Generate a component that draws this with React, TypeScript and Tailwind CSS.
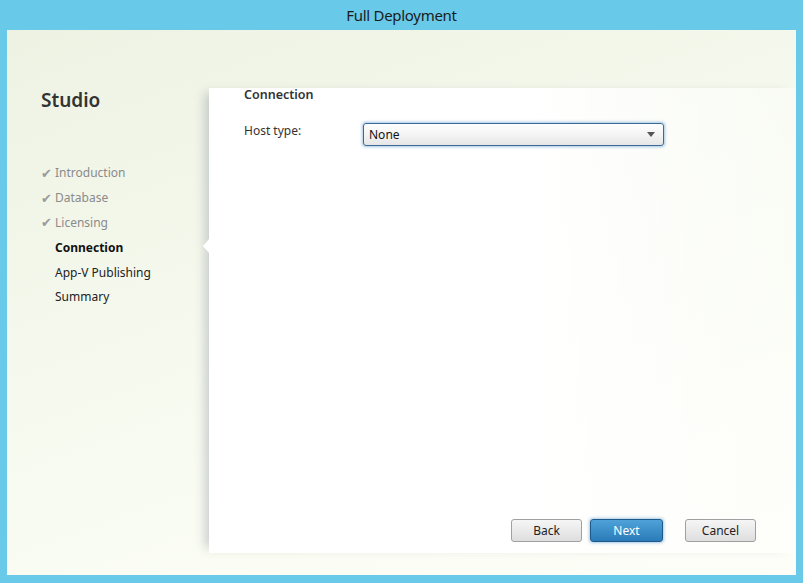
import React from "react";

const steps = [
  { label: "Introduction", done: true },
  { label: "Database", done: true },
  { label: "Licensing", done: true },
  { label: "Connection", current: true },
  { label: "App-V Publishing" },
  { label: "Summary" },
];

export default function App() {
  return (
    <div className="w-[803px] h-[583px] bg-[#68c9e9] flex flex-col font-['Noto_Sans',sans-serif] overflow-hidden">
      {/* Title bar */}
      <div className="h-[30px] flex items-center justify-center text-[15px] text-[#1b1b1b] tracking-[-0.3px]">
        Full Deployment
      </div>

      {/* Window body */}
      <div className="flex-1 mx-[7px] mb-[8px] flex bg-[linear-gradient(160deg,#edf2e3_0%,#f4f8ec_35%,#fbfdf4_75%,#fdfef8_100%)]">
        {/* Sidebar */}
        <div className="w-[202px] shrink-0 pl-[34px] pt-[58px]">
          <div className="text-[19px] font-semibold text-[#333] leading-[24px]">Studio</div>
          <ul className="mt-[49px] flex flex-col">
            {steps.map((s) => (
              <li key={s.label} className="h-[24.8px] flex items-center text-[12px]">
                <span className="w-[14px] text-[13px] leading-none text-[#9a9a9a]">{s.done ? "✔" : ""}</span>
                <span
                  className={
                    s.done
                      ? "text-[#8a8a8a]"
                      : s.current
                      ? "text-[#111] font-bold"
                      : "text-[#222]"
                  }
                >
                  {s.label}
                </span>
              </li>
            ))}
          </ul>
        </div>

        {/* Content panel */}
        <div className="relative flex-1 mt-[58px] mb-[22px] flex flex-col bg-[linear-gradient(to_right,#ffffff_0%,#ffffff_55%,rgba(255,255,255,0.35)_100%)] shadow-[-9px_0_10px_-5px_rgba(80,90,110,0.28)]">
          {/* selection notch */}
          <div className="absolute left-[-6px] top-[151px] w-0 h-0 border-y-[7px] border-y-transparent border-r-[6px] border-r-white" />

          <div className="pl-[35px]">
            <div className="text-[12.5px] font-semibold text-[#333] leading-[14px]">Connection</div>
            <div className="mt-[21px] flex items-center">
              <label className="w-[119px] text-[12px] text-[#333] -mt-[7px]">Host type:</label>
              <div className="w-[301px] h-[23px] border border-[#3b6a98] rounded-[3px] shadow-[0_0_3px_1px_rgba(90,150,200,0.55)] bg-[linear-gradient(to_bottom,#ffffff_0%,#f4f4f4_50%,#e6e6e6_100%)] flex items-center justify-between pl-[5px] pr-[8px]">
                <span className="text-[12px] text-[#111]">None</span>
                <svg width="8" height="5" viewBox="0 0 8 5">
                  <path d="M0 0h8L4 5z" fill="#555" />
                </svg>
              </div>
            </div>
          </div>

          {/* Buttons */}
          <div className="mt-auto flex justify-end pr-[40px] pb-[11px] text-[12px]">
            <button className="w-[71px] h-[23px] border border-[#a0a0a0] rounded-[3px] bg-[linear-gradient(to_bottom,#f6f6f6,#dedede)] text-[#222]">
              Back
            </button>
            <button className="ml-[8px] w-[73px] h-[23px] border border-[#1d5a8a] rounded-[3px] bg-[linear-gradient(to_bottom,#4fa2d8,#2a7bb8)] text-white shadow-[0_0_3px_1px_rgba(80,150,210,0.5)]">
              Next
            </button>
            <button className="ml-[22px] w-[71px] h-[23px] border border-[#a0a0a0] rounded-[3px] bg-[linear-gradient(to_bottom,#f6f6f6,#dedede)] text-[#222]">
              Cancel
            </button>
          </div>
        </div>
      </div>
    </div>
  );
}
